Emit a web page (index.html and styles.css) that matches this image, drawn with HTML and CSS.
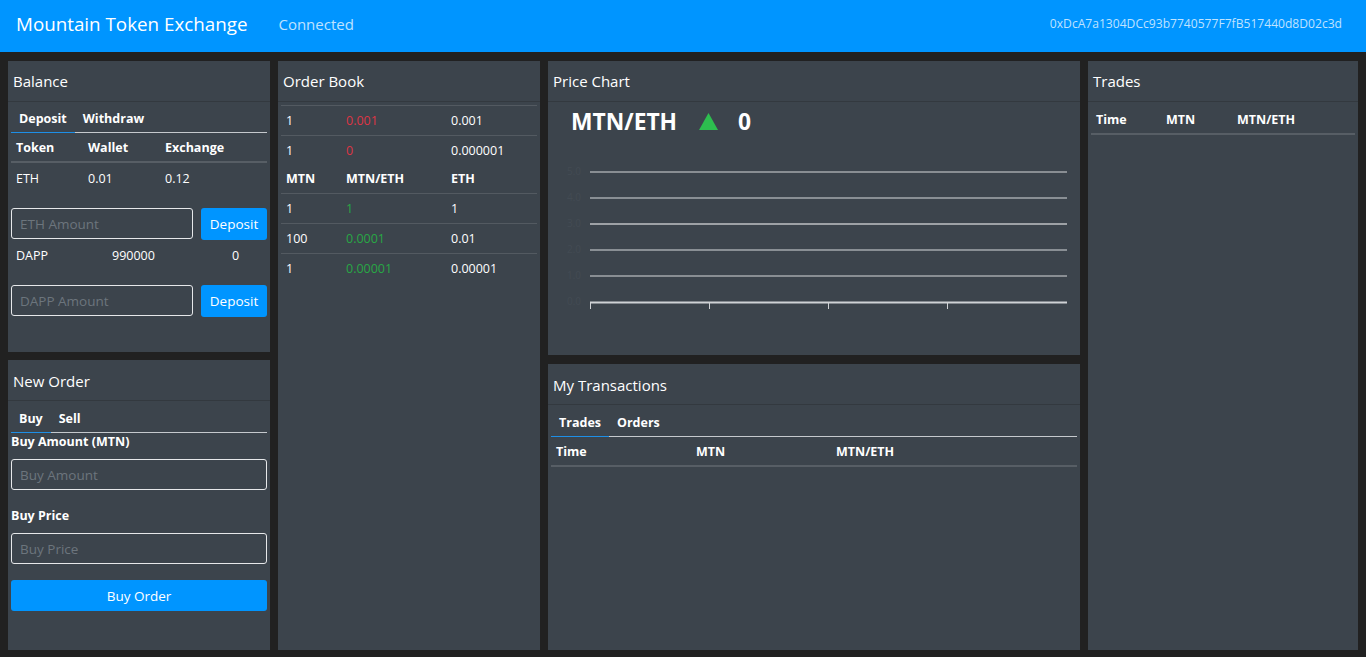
FILE: index.html
```html
<!DOCTYPE html>
<html lang="en">
<head>
<meta charset="utf-8">
<title>Mountain Token Exchange</title>
<link rel="stylesheet" href="styles.css">
</head>
<body>
<nav class="navbar">
  <span class="brand">Mountain Token Exchange</span>
  <span class="status">Connected</span>
  <span class="address">0xDcA7a1304DCc93b7740577F7fB517440d8D02c3d</span>
</nav>
<main class="main">
  <div class="col col-1">
    <section class="card card-balance">
      <div class="card-header">Balance</div>
      <div class="card-body body-balance">
        <div class="tabs">
          <span class="tab active">Deposit</span>
          <span class="tab">Withdraw</span>
        </div>
        <table class="table balance-table">
          <thead><tr><th class="w72">Token</th><th class="w77">Wallet</th><th>Exchange</th></tr></thead>
          <tbody><tr><td>ETH</td><td>0.01</td><td>0.12</td></tr></tbody>
        </table>
        <form class="inline-form">
          <input class="input" type="text" placeholder="ETH Amount">
          <button class="btn btn-small" type="button">Deposit</button>
        </form>
        <table class="table balance-table">
          <tbody><tr><td class="w96">DAPP</td><td class="w120">990000</td><td>0</td></tr></tbody>
        </table>
        <form class="inline-form">
          <input class="input" type="text" placeholder="DAPP Amount">
          <button class="btn btn-small" type="button">Deposit</button>
        </form>
      </div>
    </section>
    <section class="card card-order">
      <div class="card-header">New Order</div>
      <div class="card-body body-lower">
        <div class="tabs">
          <span class="tab active">Buy</span>
          <span class="tab">Sell</span>
        </div>
        <label class="label first-label">Buy Amount (MTN)</label>
        <input class="input input-full" type="text" placeholder="Buy Amount">
        <label class="label">Buy Price</label>
        <input class="input input-full" type="text" placeholder="Buy Price">
        <button class="btn btn-full" type="button">Buy Order</button>
      </div>
    </section>
  </div>

  <div class="col col-2">
    <section class="card card-fill">
      <div class="card-header">Order Book</div>
      <div class="card-body body-book">
        <table class="table book-table">
          <tbody>
            <tr class="bordered top"><td class="w60">1</td><td class="w105 red">0.001</td><td>0.001</td></tr>
            <tr><td>1</td><td class="red">0</td><td>0.000001</td></tr>
            <tr class="bordered"><th>MTN</th><th>MTN/ETH</th><th>ETH</th></tr>
            <tr class="bordered"><td>1</td><td class="green">1</td><td>1</td></tr>
            <tr class="bordered"><td>100</td><td class="green">0.0001</td><td>0.01</td></tr>
            <tr><td>1</td><td class="green">0.00001</td><td>0.00001</td></tr>
          </tbody>
        </table>
      </div>
    </section>
  </div>

  <div class="col col-3">
    <section class="card card-chart">
      <div class="card-header">Price Chart</div>
      <div class="card-body">
        <div class="price-head">
          <span class="pair">MTN/ETH</span>
          <svg class="arrow" width="19" height="17" viewBox="0 0 19 17"><polygon points="9.5,0 19,17 0,17" fill="#2dbe4f"/></svg>
          <span class="price">0</span>
        </div>
        <svg class="chart" width="526" height="180" viewBox="0 0 526 180">
          <g class="ylabels" font-size="10" fill="#434b53">
            <text x="16" y="34">5.0</text>
            <text x="16" y="60">4.0</text>
            <text x="16" y="86">3.0</text>
            <text x="16" y="112">2.0</text>
            <text x="16" y="138">1.0</text>
            <text x="16" y="164">0.0</text>
          </g>
          <line x1="39" y1="31" x2="516" y2="31" stroke="#a3a7ab" stroke-width="1.5"/>
          <line x1="39" y1="57" x2="516" y2="57" stroke="#d6d9dc" stroke-width="1.2"/>
          <line x1="39" y1="83" x2="516" y2="83" stroke="#ffffff" stroke-width="1"/>
          <line x1="39" y1="109" x2="516" y2="109" stroke="#d6d9dc" stroke-width="1.2"/>
          <line x1="39" y1="135" x2="516" y2="135" stroke="#a3a7ab" stroke-width="1.5"/>
          <line x1="39" y1="161.5" x2="516" y2="161.5" stroke="#cfd2d5" stroke-width="2"/>
          <g stroke="#d0d3d6" stroke-width="1">
            <line x1="39.5" y1="161" x2="39.5" y2="168"/>
            <line x1="158.5" y1="161" x2="158.5" y2="168"/>
            <line x1="277.5" y1="161" x2="277.5" y2="168"/>
            <line x1="396.5" y1="161" x2="396.5" y2="168"/>
          </g>
        </svg>
      </div>
    </section>
    <section class="card card-fill">
      <div class="card-header">My Transactions</div>
      <div class="card-body body-lower">
        <div class="tabs">
          <span class="tab active">Trades</span>
          <span class="tab">Orders</span>
        </div>
        <table class="table">
          <thead><tr><th class="w140">Time</th><th class="w140">MTN</th><th>MTN/ETH</th></tr></thead>
        </table>
      </div>
    </section>
  </div>

  <div class="col col-4">
    <section class="card card-fill">
      <div class="card-header">Trades</div>
      <div class="card-body body-trades">
        <table class="table">
          <thead><tr><th class="w70">Time</th><th class="w71">MTN</th><th>MTN/ETH</th></tr></thead>
        </table>
      </div>
    </section>
  </div>
</main>
</body>
</html>
```

FILE: styles.css
```css
* { box-sizing: border-box; }

body {
  margin: 0;
  background: #212121;
  color: #ffffff;
  font-family: "Open Sans", "Noto Sans", sans-serif;
  font-size: 12.5px;
  overflow: hidden;
}

.navbar {
  height: 52px;
  background: #0095ff;
  display: flex;
  align-items: center;
  padding: 0 24px 5px 16px;
}

.brand {
  font-size: 18.8px;
  color: #ffffff;
}

.status {
  margin-left: 31px;
  font-size: 15px;
  color: rgba(255, 255, 255, 0.75);
}

.address {
  margin-left: auto;
  font-size: 12.1px;
  color: rgba(255, 255, 255, 0.75);
}

.main {
  display: flex;
  gap: 8px;
  padding: 9px 8px 0;
  height: 598px;
}

.col {
  display: flex;
  flex-direction: column;
  gap: 8px;
}

.col-1 { width: 262px; }
.col-2 { width: 262px; }
.col-3 { width: 532px; gap: 9px; }
.col-4 { width: 270px; }

.card {
  background: #3c444c;
  display: flex;
  flex-direction: column;
}

.card-balance { height: 291px; }
.card-order { flex: 1; }
.card-chart { height: 294px; }
.card-fill { flex: 1; }

.card-header {
  height: 41px;
  padding: 0 5px;
  display: flex;
  align-items: center;
  border-bottom: 1px solid #33393f;
  font-size: 15px;
  flex-shrink: 0;
}

.card-order .card-header,
.card-fill .card-header { padding-top: 1px; }

.col-2 .card-header,
.col-4 .card-header { padding-top: 0; }

.card-body {
  padding: 3px;
  flex: 1;
}

.body-balance { padding-top: 4px; }
.body-lower { padding-top: 5px; }
.body-book { padding-top: 3px; }
.body-trades { padding-top: 3px; }

.tabs {
  display: flex;
  border-bottom: 1px solid #c5c9cd;
  height: 27px;
}

.tab {
  padding: 0 8px;
  line-height: 26px;
  font-weight: 700;
  font-size: 12.5px;
  margin-bottom: -1px;
  border-bottom: 1px solid transparent;
}

.tab.active { border-bottom-color: #1e8fe6; }

.table {
  width: 100%;
  border-collapse: collapse;
  font-size: 12.5px;
}

.table th,
.table td {
  text-align: left;
  padding: 5px;
  line-height: 19px;
  font-weight: 400;
}

.table th { font-weight: 700; }

.table thead th {
  border-bottom: 2px solid #575e65;
  padding: 5px 5px 4px;
}

.balance-table td { padding: 6px 5px 5px; line-height: 20px; }

.book-table td,
.book-table th { line-height: 19px; padding: 5px; }
.book-table th { line-height: 17px; padding: 5px 5px 6px; }

.book-table tr.bordered { border-bottom: 1px solid #535a61; }
.book-table tr.top { border-top: 1px solid #535a61; }

.w60 { width: 60px; }
.w70 { width: 70px; }
.w71 { width: 71px; }
.w72 { width: 72px; }
.w77 { width: 77px; }
.w96 { width: 96px; }
.w105 { width: 105px; }
.w120 { width: 120px; }
.w140 { width: 140px; }

.red { color: #dc3545; }
.green { color: #28a745; }

.inline-form {
  display: flex;
  gap: 8px;
  margin-top: 14px;
}

.input {
  display: block;
  height: 31px;
  width: 182px;
  background: transparent;
  border: 1px solid #e6e8ea;
  border-radius: 3px;
  padding: 0 8px;
  color: #ffffff;
  font-family: inherit;
  font-size: 13.5px;
}

.input::placeholder { color: #6c757d; }

.input-full { width: 100%; }

.btn {
  height: 32px;
  background: #0095ff;
  border: 0;
  border-radius: 3px;
  color: #ffffff;
  font-family: inherit;
  font-size: 13.5px;
  padding: 0;
}

.btn-small { width: 66px; }

.btn-full {
  width: 100%;
  height: 31px;
  margin-top: 16px;
}

.label {
  display: block;
  font-weight: 700;
  font-size: 12.5px;
  line-height: 16px;
  margin: 18px 0 9px;
}

.label.first-label { margin: 1px 0 9px; }

.price-head {
  display: flex;
  align-items: center;
  height: 36px;
  padding: 0 0 4px 20px;
}

.pair {
  font-size: 22.8px;
  font-weight: 700;
}

.arrow { margin-left: 22px; }

.price {
  margin-left: 20px;
  font-size: 22.8px;
  font-weight: 700;
}

.chart { display: block; }
```
